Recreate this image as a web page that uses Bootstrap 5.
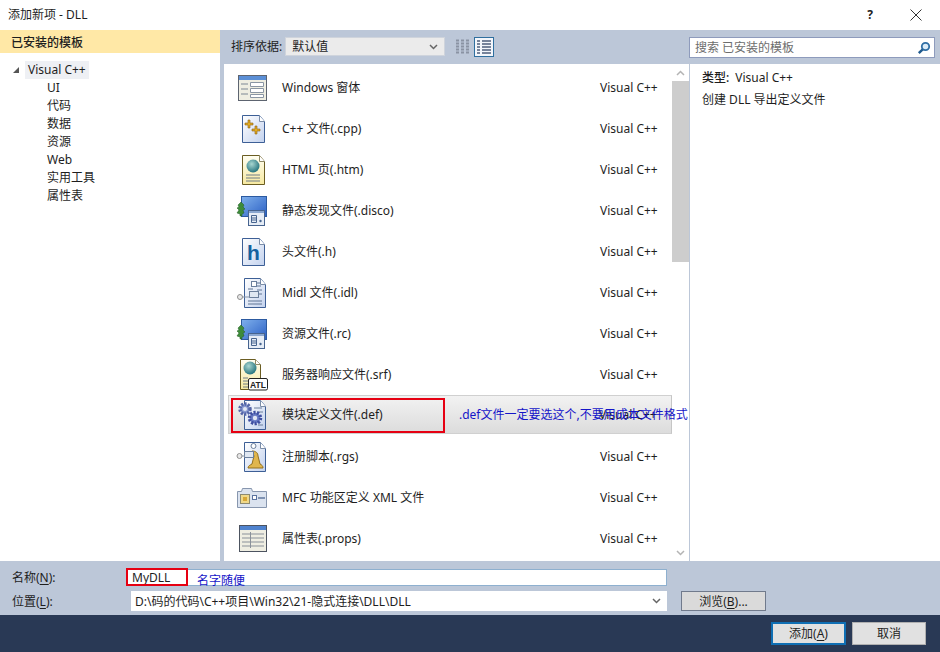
<!DOCTYPE html>
<html lang="zh-CN">
<head>
  <meta charset="UTF-8">
  <title>添加新项 - DLL</title>
  <link rel="stylesheet" href="https://cdn.jsdelivr.net/npm/bootstrap@5.3.2/dist/css/bootstrap.min.css">
  <style>
    html, body { width: 940px; height: 652px; overflow: hidden; }
    body { font-family: "Noto Sans", "Noto Sans CJK SC", sans-serif; font-size: 12px; line-height: 16px; color: #1e1e1e; background: #fff; position: relative; }
    .title-bar { height: 30px; padding-left: 8px; padding-right: 18px; }
    .title-actions { gap: 37px; }
    .title-btn { background: none; border: 0; padding: 0; color: #222; line-height: 1; }
    .work-area { height: 531px; }
    .side-panel { width: 220px; }
    .side-head { height: 23px; background: #ffe8a6; padding: 5px 11px 0; font-weight: 500; }
    .tree-root { margin: 8px 0 0 12px; height: 18px; }
    .tree-root span { background: #eef0f4; height: 18px; line-height: 18px; padding: 0 3px; margin-left: 5px; }
    .tree-list { list-style: none; margin: 0; padding: 0 0 0 47px; }
    .tree-list li { height: 18px; line-height: 18px; }
    .main-panel { width: 720px; background: #bcc7d8; }
    .tool-bar { height: 34px; padding: 7px 5px 0 11px; }
    .sort-label { margin-top: 2px; }
    .sort-select, .location-select { background-image: url("data:image/svg+xml,%3csvg xmlns='http://www.w3.org/2000/svg' viewBox='0 0 9 6'%3e%3cpath d='M1 1l3.500 3.500L8 1' fill='none' stroke='%23666' stroke-width='1.500'/%3e%3c/svg%3e"); background-position: right 6px center; background-size: 9px 6px; }
    .sort-select { width: 160px; height: 19px; margin-left: 3px; margin-right: 8px; padding: 0 20px 0 6px; font-size: 12px; line-height: 17px; border-radius: 0; border: 1px solid #cfd4dc; background-color: #ebebeb; color: #1e1e1e; }
    .view-btn { width: 20px; height: 20px; padding: 1px; display: block; margin-right: 1px; border: 1px solid transparent; }
    .view-on { background: #f3f6fb; border-color: #2f6f9f; }
    .search-box { width: 246px; height: 21px; margin-left: auto; background: #fff; border: 1px solid #8e9bbc; padding: 0 3px 0 5px; color: #6d6d6d; }
    .list-wrap { height: 497px; }
    .item-list { width: 448px; margin-left: 4px; background: #fff; padding-top: 3px; overflow: hidden; }
    .item-row { height: 41px; padding-left: 12px; padding-right: 15px; }
    .item-row svg { width: 32px; height: 32px; flex: none; }
    .item-name { margin-left: 14px; }
    .item-lang { margin-left: auto; width: 57px; white-space: nowrap; }
    .item-sel { margin-left: 4px; padding-left: 7px; height: 39px; margin-top: 0; margin-bottom: 2px; background: linear-gradient(#f2f2f2, #dcdcdc); border: 1px solid #d0d0d0; border-right: 1px solid #c6c6c6; }
    .scroll-track { width: 17px; background: #fff; flex: none; }
    .scroll-arrow { height: 17px; }
    .scroll-thumb { height: 181px; background: #cdcdcd; }
    .info-panel { width: 251px; flex: none; background: #fff; border-left: 1px solid #bcc7d8; padding: 6px 12px; }
    .info-panel p { margin: 0 0 6px; }
    .info-key { margin-right: 6px; font-weight: 500; }
    .form-area { height: 54px; background: #bcc7d8; padding: 8px 0 0 12px; }
    .field-label { width: 114px; flex: none; padding-top: 1px; }
    .name-input { width: 541px; height: 17px; border: 1px solid #8eb0cf; background: #fff; border-radius: 0; padding: 0 5px; font-size: 12px; color: #1e1e1e; box-shadow: none; }
    .location-select { width: 536px; margin-left: 5px; height: 20px; border: 0; border-radius: 0; padding: 1px 20px 0 4px; font-size: 12px; line-height: 19px; color: #1e1e1e; }
    .form-line { height: 17px; }
    .form-line-2 { margin-top: 5px; height: 20px; }
    .browse-btn { margin-left: 14px; width: 85px; height: 20px; padding: 0; font-size: 12px; line-height: 17px; border-radius: 0; border: 1px solid #707a8c; background: #dadada; color: #1e1e1e; }
    .foot-bar { height: 37px; background: #293955; padding: 7px 14px 0 0; gap: 6px; }
    .foot-btn { width: 74px; height: 23px; padding: 0; font-size: 12px; line-height: 20px; border-radius: 0; border: 1px solid #b0b0b0; background: #e1e1e1; color: #1e1e1e; }
    .foot-btn-main { width: 75px; border: 2px solid #0f6fb4; line-height: 19px; }
    .red-box { position: absolute; border: 2px solid #e60012; }
    .box-def { left: 231px; top: 398px; width: 214px; height: 35px; }
    .box-name { left: 126px; top: 568px; width: 62px; height: 18px; }
    .note { position: absolute; color: #1515c8; font-size: 12px; white-space: nowrap; }
    .note-def { left: 459px; top: 407px; }
    .note-name { left: 197px; top: 573px; }
    .atl-tag { font-family: "Liberation Sans", sans-serif; font-size: 8.500px; font-weight: 700; fill: #222; }
    .h-tag { font-family: "Liberation Sans", sans-serif; font-size: 21px; font-weight: 700; fill: #13609e; }
    u { text-underline-offset: 2px; }
  </style>
</head>
<body>
  <svg width="0" height="0" class="position-absolute">
    <defs>
      <linearGradient id="paper" x1="0" y1="0" x2="1" y2="1"><stop offset="0" stop-color="#fff"/><stop offset="1" stop-color="#c3d2ee"/></linearGradient>
      <linearGradient id="paperY" x1="0" y1="0" x2="0" y2="1"><stop offset="0" stop-color="#fffef2"/><stop offset="1" stop-color="#f7e9a0"/></linearGradient>
      <linearGradient id="screen" x1="0" y1="0" x2="1" y2="1"><stop offset="0" stop-color="#7fb0ec"/><stop offset="1" stop-color="#2a5fc4"/></linearGradient>
      <radialGradient id="globe" cx=".4" cy=".35" r=".7"><stop offset="0" stop-color="#a8d6d0"/><stop offset="1" stop-color="#1f6f7a"/></radialGradient>

      <symbol id="i-form" viewBox="0 0 32 32">
        <rect x="2.500" y="3.500" width="28" height="25" fill="#efeee2" stroke="#5d6470"/>
        <rect x="3" y="4" width="27" height="4" fill="#5b8fd6"/>
        <path d="M5 12h7M5 17h7M5 22h7" stroke="#7d8794"/>
        <path d="M14.500 10.500h13v4h-13zM14.500 16.500h13v4h-13zM14.500 22.500h13v3h-13z" fill="#fff" stroke="#8a96a4"/>
      </symbol>
      <symbol id="i-cpp" viewBox="0 0 32 32">
        <path d="M6.500 2.500h17l5 6v21h-22z" fill="url(#paper)" stroke="#3d5f96"/>
        <path d="M23.500 2.500v6h5" fill="#fff" stroke="#7c8ea8"/>
        <path d="M12 7h2v3h3v2h-3v3h-2v-3H9v-2h3zM19 13h2v3h3v2h-3v3h-2v-3h-3v-2h3z" fill="#e2ab22" stroke="#8c5f10" stroke-width=".6"/>
      </symbol>
      <symbol id="i-html" viewBox="0 0 32 32">
        <path d="M6.500 1.500h17l5 6v23h-22z" fill="url(#paperY)" stroke="#6b5d22"/>
        <path d="M23.500 1.500v6h5" fill="#fff" stroke="#8f8a66"/>
        <circle cx="17" cy="12" r="6.500" fill="url(#globe)"/>
        <path d="M10 21h14M10 24h14M10 27h14" stroke="#6f7c86"/>
      </symbol>
      <symbol id="i-disco" viewBox="0 0 32 32">
        <rect x="5.500" y="1.500" width="25" height="20" fill="url(#screen)" stroke="#2c5aa0"/>
        <rect x="12.500" y="15.500" width="16" height="15" fill="#e6edf6" stroke="#47648f"/>
        <rect x="13" y="16" width="15" height="2" fill="#8aa7d0"/>
        <path d="M15.500 20.500h5v7h-5zM16 23h4M16 25h4" fill="none" stroke="#47648f"/>
        <circle cx="24.500" cy="26" r="1.200" fill="#47648f"/>
        <path d="M5 7l3 3-1 2 2 2-2 1 1 3-2 1v2H4v-2l-3-1 2-3-2-2 2-1-1-2z" fill="#3d8b3a" stroke="#1f5a20" stroke-width=".5"/>
      </symbol>
      <symbol id="i-h" viewBox="0 0 32 32">
        <path d="M6.500 2.500h17l5 6v21h-22z" fill="url(#paper)" stroke="#3d5f96"/>
        <path d="M23.500 2.500v6h5" fill="#fff" stroke="#7c8ea8"/>
        <text x="11" y="24" class="h-tag">h</text>
      </symbol>
      <symbol id="i-idl" viewBox="0 0 32 32">
        <path d="M8.500 1.500h16l5 6v23h-21z" fill="url(#paper)" stroke="#3d5f96"/>
        <path d="M24.500 1.500v6h5" fill="#fff" stroke="#7c8ea8"/>
        <path d="M12 12h5M20 6h5M20 9h5M21 13h5M21 17h5M12 24h14M12 27h14" stroke="#5f7494"/>
        <rect x="15.500" y="4.500" width="5" height="5" fill="#fff" stroke="#6b7f9c"/>
        <rect x="13.500" y="14.500" width="9" height="6" fill="#dfe7f2" stroke="#6b7f9c"/>
        <path d="M6 20h8" stroke="#8795a8"/><circle cx="4" cy="20" r="2.500" fill="#e8e8e8" stroke="#8f8f8f"/>
      </symbol>
      <symbol id="i-atl" viewBox="0 0 32 32">
        <path d="M4.500 .5h15l5 5v25h-20z" fill="url(#paperY)" stroke="#6b5d22"/>
        <path d="M19.500 .5v5h5" fill="#fff" stroke="#8f8a66"/>
        <circle cx="14" cy="9" r="6.500" fill="url(#globe)"/>
        <path d="M7 19h5M7 22h5M7 25h5M7 28h5" stroke="#6f7c86"/>
        <rect x="12.500" y="19.500" width="19" height="11.500" rx="1.500" fill="#fff" stroke="#222"/>
        <text x="14" y="28.500" class="atl-tag">ATL</text>
      </symbol>
      <symbol id="i-def" viewBox="0 0 32 32">
        <path d="M8.500 1.500h16l5 6v23h-21z" fill="url(#paper)" stroke="#3d5f96"/>
        <path d="M24.500 1.500v6h5" fill="#fff" stroke="#7c8ea8"/>
        <path d="M18 9h8M21 13h6M22 26h5" stroke="#6b7f9c"/>
        <circle cx="9" cy="10" r="5" fill="#8a9bd0" stroke="#5566a8" stroke-width="3.500" stroke-dasharray="2 1.200"/>
        <circle cx="9" cy="10" r="2" fill="#e3e8f4"/>
        <circle cx="19" cy="19" r="5.500" fill="#6a7cc6" stroke="#3f4fa0" stroke-width="3.500" stroke-dasharray="2 1.400"/>
        <circle cx="19" cy="19" r="2.200" fill="#e3e8f4"/>
      </symbol>
      <symbol id="i-rgs" viewBox="0 0 32 32">
        <path d="M8.500 1.500h16l5 6v23h-21z" fill="url(#paper)" stroke="#3d5f96"/>
        <path d="M24.500 1.500v6h5" fill="#fff" stroke="#7c8ea8"/>
        <path d="M16 10c4 0 6 2 6 5l2 8c2 1 3 2 3 4H12c0-2 2-3 4-4l2-8z" fill="#e0b64e" stroke="#94701c"/>
        <rect x="8.500" y="10.500" width="9" height="6" fill="#dfe7f2" stroke="#6b7f9c"/>
        <circle cx="17.500" cy="5" r="2.500" fill="#fff" stroke="#6b7f9c"/>
        <path d="M5 15h4" stroke="#8795a8"/><circle cx="3.500" cy="15" r="2.500" fill="#e8e8e8" stroke="#8f8f8f"/>
      </symbol>
      <symbol id="i-mfc" viewBox="0 0 32 32">
        <path d="M1.500 9.500h4l1-3h9l1 3h14v16h-29z" fill="#dbe3ef" stroke="#8796ae"/>
        <rect x="4.500" y="12.500" width="9" height="9" fill="#f0d98a" stroke="#8d8a70"/>
        <rect x="7" y="15" width="4" height="4" fill="#d8a836"/>
        <rect x="16.500" y="13.500" width="4" height="4" fill="#fff" stroke="#5a73a0"/>
        <rect x="22" y="15" width="7" height="2" fill="#7e92b2"/>
      </symbol>
      <symbol id="i-props" viewBox="0 0 32 32">
        <rect x="3.500" y="2.500" width="27" height="26" fill="#efeee2" stroke="#4c5360"/>
        <rect x="4" y="3" width="26" height="4" fill="#4f83cf"/>
        <path d="M6 11h22M6 15h22M6 19h22M6 23h22M14.500 9v16" stroke="#8a919a"/>
      </symbol>
      <symbol id="i-grid-s" viewBox="0 0 16 16">
        <path d="M1 1.500h3M6 1.500h3M11 1.500h3M1 4.500h3M6 4.500h3M11 4.500h3M1 7.500h3M6 7.500h3M11 7.500h3M1 10.500h3M6 10.500h3M11 10.500h3M1 13.500h3M6 13.500h3M11 13.500h3" stroke="#8a93a3" stroke-width="2"/>
      </symbol>
      <symbol id="i-grid-d" viewBox="0 0 16 16">
        <path d="M1 2h3M6 2h9M1 5h3M6 5h9M1 8h3M6 8h9M1 11h3M6 11h9M1 14h3M6 14h9" stroke="#4f5f7c" stroke-width="1.500"/>
      </symbol>
    </defs>
  </svg>

  <div class="title-bar d-flex align-items-center justify-content-between">
    <span>添加新项 - DLL</span>
    <div class="title-actions d-flex align-items-center">
      <button class="title-btn fw-bold" type="button">?</button>
      <button class="title-btn" type="button" aria-label="关闭">
        <svg width="12" height="12" viewBox="0 0 12 12" class="d-block"><path d="M.5.500l11 11M11.500.500l-11 11" stroke="#333" fill="none"/></svg>
      </button>
    </div>
  </div>

  <div class="work-area d-flex">
    <div class="side-panel">
      <div class="side-head">已安装的模板</div>
      <div class="tree-root d-flex align-items-center">
        <svg width="8" height="8" viewBox="0 0 8 8"><path d="M7 1v6H1z" fill="#555"/></svg>
        <span>Visual C++</span>
      </div>
      <ul class="tree-list">
        <li>UI</li>
        <li>代码</li>
        <li>数据</li>
        <li>资源</li>
        <li>Web</li>
        <li>实用工具</li>
        <li>属性表</li>
      </ul>
    </div>

    <div class="main-panel">
      <div class="tool-bar d-flex align-items-start">
        <span class="sort-label">排序依据:</span>
        <select class="form-select sort-select"><option>默认值</option></select>
        <span class="view-btn"><svg width="16" height="16" class="d-block"><use href="#i-grid-s"/></svg></span>
        <span class="view-btn view-on"><svg width="16" height="16" class="d-block"><use href="#i-grid-d"/></svg></span>
        <div class="search-box d-flex align-items-center justify-content-between">
          <span>搜索 已安装的模板</span>
          <svg width="14" height="14" viewBox="0 0 14 14"><circle cx="8.500" cy="5.500" r="3.700" fill="#dcecf8" stroke="#2f6ea5" stroke-width="1.800"/><path d="M5.700 8.300L1.800 12.200" stroke="#1f5a8e" stroke-width="2.400"/></svg>
        </div>
      </div>

      <div class="list-wrap d-flex">
        <div class="item-list">
          <div class="item-row d-flex align-items-center"><svg><use href="#i-form"/></svg><span class="item-name">Windows 窗体</span><span class="item-lang">Visual C++</span></div>
          <div class="item-row d-flex align-items-center"><svg><use href="#i-cpp"/></svg><span class="item-name">C++ 文件(.cpp)</span><span class="item-lang">Visual C++</span></div>
          <div class="item-row d-flex align-items-center"><svg><use href="#i-html"/></svg><span class="item-name">HTML 页(.htm)</span><span class="item-lang">Visual C++</span></div>
          <div class="item-row d-flex align-items-center"><svg><use href="#i-disco"/></svg><span class="item-name">静态发现文件(.disco)</span><span class="item-lang">Visual C++</span></div>
          <div class="item-row d-flex align-items-center"><svg><use href="#i-h"/></svg><span class="item-name">头文件(.h)</span><span class="item-lang">Visual C++</span></div>
          <div class="item-row d-flex align-items-center"><svg><use href="#i-idl"/></svg><span class="item-name">Midl 文件(.idl)</span><span class="item-lang">Visual C++</span></div>
          <div class="item-row d-flex align-items-center"><svg><use href="#i-disco"/></svg><span class="item-name">资源文件(.rc)</span><span class="item-lang">Visual C++</span></div>
          <div class="item-row d-flex align-items-center"><svg><use href="#i-atl"/></svg><span class="item-name">服务器响应文件(.srf)</span><span class="item-lang">Visual C++</span></div>
          <div class="item-row item-sel d-flex align-items-center"><svg><use href="#i-def"/></svg><span class="item-name">模块定义文件(.def)</span><span class="item-lang">Visual C++</span></div>
          <div class="item-row d-flex align-items-center"><svg><use href="#i-rgs"/></svg><span class="item-name">注册脚本(.rgs)</span><span class="item-lang">Visual C++</span></div>
          <div class="item-row d-flex align-items-center"><svg><use href="#i-mfc"/></svg><span class="item-name">MFC 功能区定义 XML 文件</span><span class="item-lang">Visual C++</span></div>
          <div class="item-row d-flex align-items-center"><svg><use href="#i-props"/></svg><span class="item-name">属性表(.props)</span><span class="item-lang">Visual C++</span></div>
        </div>

        <div class="scroll-track d-flex flex-column">
          <div class="scroll-arrow d-flex align-items-center justify-content-center"><svg width="9" height="6" viewBox="0 0 9 6"><path d="M1 5l3.500-3.500L8 5" fill="none" stroke="#b4b4b4" stroke-width="1.500"/></svg></div>
          <div class="scroll-thumb"></div>
          <div class="scroll-arrow d-flex align-items-center justify-content-center mt-auto"><svg width="9" height="6" viewBox="0 0 9 6"><path d="M1 1l3.500 3.500L8 1" fill="none" stroke="#b4b4b4" stroke-width="1.500"/></svg></div>
        </div>

        <div class="info-panel">
          <p><span class="info-key">类型:</span>Visual C++</p>
          <p>创建 DLL 导出定义文件</p>
        </div>
      </div>
    </div>
  </div>

  <div class="form-area">
    <div class="form-line d-flex align-items-center">
      <label class="field-label">名称(<u>N</u>):</label>
      <input class="form-control name-input" type="text" value="MyDLL">
    </div>
    <div class="form-line-2 d-flex align-items-center">
      <label class="field-label">位置(<u>L</u>):</label>
      <select class="form-select location-select"><option>D:\码的代码\C++项目\Win32\21-隐式连接\DLL\DLL</option></select>
      <button class="btn browse-btn" type="button">浏览(<u>B</u>)...</button>
    </div>
  </div>

  <div class="foot-bar d-flex justify-content-end">
    <button class="btn foot-btn foot-btn-main" type="button">添加(<u>A</u>)</button>
    <button class="btn foot-btn" type="button">取消</button>
  </div>

  <div class="red-box box-def"></div>
  <div class="red-box box-name"></div>
  <span class="note note-def">.def文件一定要选这个,不要用成本文件格式</span>
  <span class="note note-name">名字随便</span>
</body>
</html>
